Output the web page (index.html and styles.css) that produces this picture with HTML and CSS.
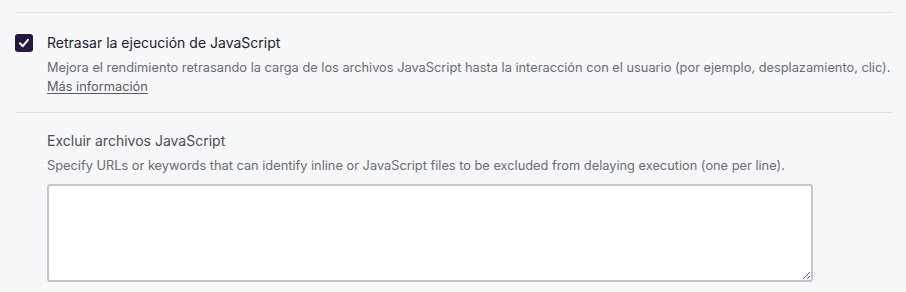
FILE: index.html
```html
<!DOCTYPE html>
<html lang="es">
<head>
<meta charset="utf-8">
<link rel="stylesheet" href="styles.css">
</head>
<body>
<div class="panel">
  <div class="divider"></div>
  <div class="option">
    <span class="checkbox">
      <svg width="18" height="18" viewBox="0 0 18 18"><path d="M5 9.3 L7.8 12.2 L13 5.8" fill="none" stroke="#fff" stroke-width="2" stroke-linecap="round" stroke-linejoin="round"/></svg>
    </span>
    <div class="option-text">
      <div class="option-title">Retrasar la ejecución de JavaScript</div>
      <div class="option-desc">Mejora el rendimiento retrasando la carga de los archivos JavaScript hasta la interacción con el usuario (por ejemplo, desplazamiento, clic).</div>
      <a class="option-link" href="#">Más información</a>
    </div>
  </div>
  <div class="divider"></div>
  <div class="sub">
    <div class="sub-title">Excluir archivos JavaScript</div>
    <div class="sub-desc">Specify URLs or keywords that can identify inline or JavaScript files to be excluded from delaying execution (one per line).</div>
    <textarea class="sub-input"></textarea>
  </div>
</div>
</body>
</html>
```
FILE: styles.css
```css
html, body {
  margin: 0;
  padding: 0;
  background: #f6f7f9;
}
body {
  font-family: Inter, "Noto Sans", sans-serif;
  -webkit-font-smoothing: antialiased;
}
.panel {
  padding: 12px 13px 0 15px;
}
.divider {
  height: 1px;
  background: #e1e3e7;
}
.option {
  display: flex;
  gap: 14px;
  padding: 21px 0 16px;
}
.checkbox {
  flex: none;
  width: 18px;
  height: 18px;
  border-radius: 3px;
  background: #26183f;
  display: block;
}
.checkbox svg { display: block; }
.option-text {
  display: flex;
  flex-direction: column;
}
.option-title {
  font-size: 14px;
  line-height: 18px;
  color: #23232b;
}
.option-desc {
  margin-top: 6px;
  font-size: 12.8px;
  line-height: 19px;
  color: #6a6c73;
}
.option-link {
  font-size: 12.8px;
  line-height: 19px;
  color: #5a5c63;
  text-decoration: underline;
  text-underline-offset: 2px;
  align-self: flex-start;
}
.sub {
  padding: 18px 0 0 32px;
}
.sub-title {
  font-size: 14px;
  line-height: 20px;
  color: #4c4d54;
}
.sub-desc {
  margin-top: 5px;
  font-size: 12.8px;
  line-height: 19px;
  color: #6a6c73;
}
.sub-input {
  display: block;
  box-sizing: border-box;
  margin-top: 9px;
  width: 766px;
  height: 98px;
  border: 2px solid #c4c8ce;
  border-radius: 3px;
  background: #fff;
  resize: vertical;
}
```
